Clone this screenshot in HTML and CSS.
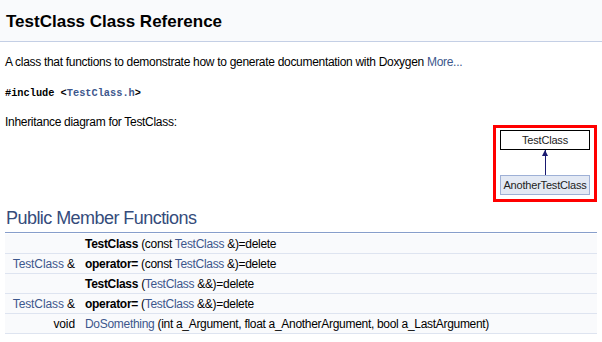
FILE: index.html
```html
<!DOCTYPE html>
<html lang="en">
<head>
  <meta charset="UTF-8" />
  <title>TestClass Class Reference</title>
  <link rel="stylesheet" href="styles.css">
</head>
<body>

  <div class="header">
    <div class="title">TestClass Class Reference</div>
  </div>

  <div class="contents">
    <p class="brief">A class that functions to demonstrate how to generate documentation with Doxygen <a href="#details">More...</a></p>

    <p class="include"><code>#include &lt;<a href="#">TestClass.h</a>&gt;</code></p>

    <div class="inherit">
      <p>Inheritance diagram for TestClass:</p>
      <div class="diagram">
        <div class="node base">TestClass</div>
        <div class="arrow"></div>
        <div class="node derived">AnotherTestClass</div>
      </div>
    </div>

    <h2 class="groupheader">Public Member Functions</h2>
    <table class="memberdecls">
      <tr>
        <td class="left"></td>
        <td class="right"><b>TestClass</b> (const <a href="#">TestClass</a> &amp;)=delete</td>
      </tr>
      <tr>
        <td class="left"><a href="#">TestClass</a> &amp;</td>
        <td class="right"><b>operator=</b> (const <a href="#">TestClass</a> &amp;)=delete</td>
      </tr>
      <tr>
        <td class="left"></td>
        <td class="right"><b>TestClass</b> (<a href="#">TestClass</a> &amp;&amp;)=delete</td>
      </tr>
      <tr>
        <td class="left"><a href="#">TestClass</a> &amp;</td>
        <td class="right"><b>operator=</b> (<a href="#">TestClass</a> &amp;&amp;)=delete</td>
      </tr>
      <tr>
        <td class="left">void</td>
        <td class="right"><a href="#">DoSomething</a> (int a_Argument, float a_AnotherArgument, bool a_LastArgument)</td>
      </tr>
    </table>
  </div>

</body>
</html>
```

FILE: styles.css
```css
body {
  margin: 0;
  font-family: "Liberation Sans", Arial, sans-serif;
  font-size: 12px;
  letter-spacing: -0.3px;
  color: #000;
  background-color: #fff;
}
a {
  color: #3d578c;
  text-decoration: none;
}
.header {
  background-color: #f9fafc;
  border-bottom: 1px solid #c4cfe5;
  height: 41px;
  display: flex;
  align-items: center;
  padding-left: 6px;
}
.title {
  font-size: 17px;
  font-weight: bold;
  letter-spacing: 0;
  margin-top: 2px;
}
.contents {
  padding: 0 5px;
}
.contents p {
  margin: 0;
  line-height: 14px;
}
.contents p.brief {
  margin-top: 13px;
}
.contents p.include {
  margin-top: 16px;
}
code {
  font-family: "Liberation Mono", monospace;
  font-size: 10.3px;
  font-weight: bold;
  letter-spacing: 0;
}
.inherit {
  display: flex;
  justify-content: space-between;
  align-items: flex-start;
  margin-top: 15px;
}
.diagram {
  margin-top: 10px;
  border: 3px solid #ff0000;
  padding: 2px 4px 4px 4px;
  display: flex;
  flex-direction: column;
  align-items: center;
}
.node {
  box-sizing: border-box;
  width: 90px;
  height: 20px;
  line-height: 18px;
  text-align: center;
  font-size: 11px;
  letter-spacing: -0.2px;
  color: #222;
}
.base {
  border: 1px solid #000;
  background-color: #fff;
}
.derived {
  border: 1px solid #9eb0d6;
  background-color: #e3e9f4;
}
.arrow {
  position: relative;
  width: 1px;
  height: 25px;
  background-color: #191970;
}
.arrow::before {
  content: "";
  position: absolute;
  top: 0;
  left: -3px;
  border-left: 3.5px solid transparent;
  border-right: 3.5px solid transparent;
  border-bottom: 6px solid #191970;
}
h2.groupheader {
  font-size: 18px;
  font-weight: normal;
  letter-spacing: -0.55px;
  color: #354c7b;
  margin: 6px 0 0 0;
  padding: 0 0 3px 1px;
  line-height: 21px;
  border-bottom: 1px solid #879ecb;
}
.memberdecls {
  width: 100%;
  border-collapse: collapse;
  margin-top: 1px;
}
.memberdecls td {
  background-color: #f9fafc;
  border-bottom: 1px solid #dee4f0;
  height: 19px;
  padding: 0 4px;
  white-space: nowrap;
}
.memberdecls td.left {
  text-align: right;
  width: 66px;
  letter-spacing: -0.1px;
}
.memberdecls td.right {
  padding-left: 6px;
}
```
